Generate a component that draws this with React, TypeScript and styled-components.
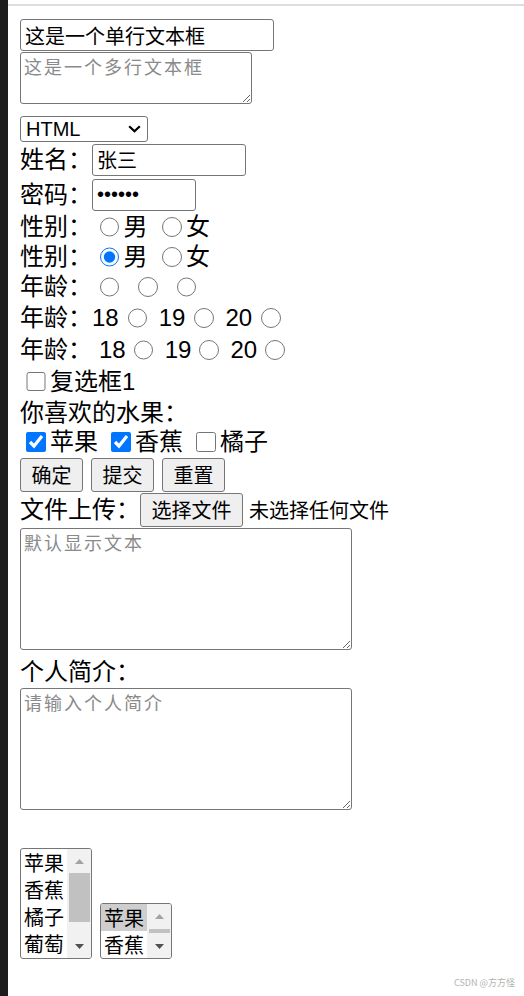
import React from "react";
import styled, { createGlobalStyle } from "styled-components";

const GlobalStyle = createGlobalStyle`
  html, body { margin: 0; padding: 0; background: #fff; }
  body { font-family: "Liberation Sans", "Noto Sans CJK SC", sans-serif; }
  * { box-sizing: border-box; }
`;

const Page = styled.div`
  position: relative;
  display: flex;
  min-height: 996px;
  background: #fff;
`;

const EdgeStrip = styled.div`
  width: 8px;
  flex-shrink: 0;
  background: #1d1d1d;
`;

const Content = styled.main`
  flex: 1;
  padding-top: 4px;
`;

const TopRule = styled.div`
  height: 2px;
  background: #dedede;
`;

const Form = styled.form`
  display: flex;
  flex-direction: column;
  align-items: flex-start;
  padding: 13px 0 0 12px;
  font-family: "Liberation Sans", "Noto Sans CJK SC", sans-serif;
  font-size: 24px;
  color: #000;
`;

const TextField = styled.input<{ $w: number }>`
  width: ${(p) => p.$w}px;
  height: 32px;
  margin: 0;
  padding: 0 4px;
  border: 1px solid #767676;
  border-radius: 3px;
  font-family: "Liberation Sans", "Noto Sans CJK SC", sans-serif;
  font-size: 20px;
  color: #000;
  background: #fff;
  outline: none;
`;

const TextArea = styled.textarea<{ $w: number; $h: number; $mt?: number }>`
  display: block;
  width: ${(p) => p.$w}px;
  height: ${(p) => p.$h}px;
  margin: ${(p) => p.$mt ?? 0}px 0 0;
  padding: 2px 3px;
  border: 1px solid #767676;
  border-radius: 3px;
  font-family: "Noto Sans CJK SC", sans-serif;
  font-size: 18px;
  letter-spacing: 2px;
  line-height: 22px;
  color: #000;
  background: #fff;
  outline: none;
  &::placeholder {
    color: #8a8a8a;
  }
`;

const SelectBox = styled.div`
  display: flex;
  align-items: center;
  width: 128px;
  height: 26px;
  margin-top: 12px;
  padding-right: 6px;
  border: 1px solid #767676;
  border-radius: 3px;
  background: #fff;
`;

const SelectControl = styled.select`
  appearance: none;
  flex: 1;
  height: 100%;
  margin: 0;
  padding: 0 0 0 5px;
  border: none;
  outline: none;
  background: transparent;
  font-family: "Liberation Sans", "Noto Sans CJK SC", sans-serif;
  font-size: 20px;
  line-height: 24px;
  color: #000;
`;

const Chevron = styled.svg`
  flex-shrink: 0;
  pointer-events: none;
`;

const Row = styled.div<{ $h: number; $mt?: number }>`
  display: flex;
  align-items: center;
  height: ${(p) => p.$h}px;
  margin-top: ${(p) => p.$mt ?? 0}px;
  line-height: 1.3;
  white-space: nowrap;
`;

const Label = styled.span`
  font-size: 24px;
`;

const Choices = styled.div<{ $indent?: number }>`
  display: flex;
  align-items: center;
  gap: 7px;
  margin-left: ${(p) => p.$indent ?? 0}px;
`;

const Choice = styled.label`
  display: inline-flex;
  align-items: center;
  font-size: 24px;
`;

const Radio = styled.input.attrs({ type: "radio" })<{ $ml?: number }>`
  flex-shrink: 0;
  width: 19.5px;
  height: 19.5px;
  margin: 0 4.5px 0 ${(p) => p.$ml ?? 7.5}px;
  accent-color: #0075ff;
`;

const Check = styled.input.attrs({ type: "checkbox" })`
  flex-shrink: 0;
  width: 19.5px;
  height: 19.5px;
  margin: 0 4.5px 0 6px;
  accent-color: #0075ff;
`;

const ButtonRow = styled.div`
  display: flex;
  gap: 8px;
  margin-top: 3px;
`;

const PushButton = styled.button`
  height: 34px;
  margin: 0;
  padding: 0 10.5px;
  border: 1px solid #767676;
  border-radius: 3px;
  background: #efefef;
  font-family: "Noto Sans CJK SC", sans-serif;
  font-size: 20px;
  line-height: 1;
  color: #000;
`;

const FileName = styled.span`
  margin-left: 6px;
  font-family: "Noto Sans CJK SC", sans-serif;
  font-size: 20px;
`;

const ListRow = styled.div`
  display: flex;
  align-items: flex-end;
  gap: 8px;
  margin-top: 38px;
`;

const ListBox = styled.div<{ $h: number }>`
  display: flex;
  width: 72px;
  height: ${(p) => p.$h}px;
  border: 1px solid #767676;
  border-radius: 3px;
  overflow: hidden;
  background: #fff;
`;

const OptionList = styled.ul`
  flex: 1;
  margin: 0;
  padding: 0;
  list-style: none;
`;

const OptionItem = styled.li<{ $selected?: boolean }>`
  height: 27px;
  padding-left: 3px;
  font-family: "Noto Sans CJK SC", sans-serif;
  font-size: 20px;
  line-height: 27px;
  white-space: nowrap;
  color: #000;
  background: ${(p) => (p.$selected ? "#cecece" : "transparent")};
`;

const ScrollBar = styled.div`
  display: flex;
  flex-direction: column;
  flex-shrink: 0;
  width: 24px;
  background: #f1f1f1;
`;

const ScrollArrow = styled.div<{ $h: number }>`
  display: flex;
  align-items: center;
  justify-content: center;
  flex-shrink: 0;
  height: ${(p) => p.$h}px;
`;

const ScrollTrack = styled.div`
  flex: 1;
  padding: 0 1px 0 2px;
`;

const ScrollThumb = styled.div<{ $h: number; $mt?: number }>`
  height: ${(p) => p.$h}px;
  margin-top: ${(p) => p.$mt ?? 0}px;
  background: #c1c1c1;
`;

const Watermark = styled.div`
  position: absolute;
  right: 9px;
  bottom: 7px;
  font-family: "Noto Sans CJK SC", sans-serif;
  font-size: 9px;
  line-height: 12px;
  color: #b3b3b3;
`;

const Arrow = ({ up, color }: { up?: boolean; color: string }) => (
  <svg width="9" height="5" viewBox="0 0 9 5">
    {up ? <polygon points="0,5 9,5 4.5,0" fill={color} /> : <polygon points="0,0 9,0 4.5,5" fill={color} />}
  </svg>
);

type ListProps = {
  items: string[];
  height: number;
  selected?: number;
  upH: number;
  downH: number;
  thumbH: number;
  thumbMt?: number;
};

const FakeListBox = ({ items, height, selected, upH, downH, thumbH, thumbMt }: ListProps) => (
  <ListBox $h={height}>
    <OptionList>
      {items.map((it, i) => (
        <OptionItem key={it} $selected={i === selected}>
          {it}
        </OptionItem>
      ))}
    </OptionList>
    <ScrollBar>
      <ScrollArrow $h={upH}>
        <Arrow up color="#a3a3a3" />
      </ScrollArrow>
      <ScrollTrack>
        <ScrollThumb $h={thumbH} $mt={thumbMt} />
      </ScrollTrack>
      <ScrollArrow $h={downH}>
        <Arrow color="#505050" />
      </ScrollArrow>
    </ScrollBar>
  </ListBox>
);

export default function App() {
  return (
    <>
      <GlobalStyle />
      <Page>
        <EdgeStrip />
        <Content>
          <TopRule />
          <Form onSubmit={(e) => e.preventDefault()}>
            <TextField $w={254} type="text" defaultValue="这是一个单行文本框" />
            <TextArea $w={232} $h={52} $mt={1} placeholder="这是一个多行文本框" />
            <SelectBox>
              <SelectControl defaultValue="HTML">
                <option>HTML</option>
                <option>CSS</option>
                <option>JavaScript</option>
              </SelectControl>
              <Chevron width="13" height="8" viewBox="0 0 13 8">
                <polyline points="1.2,1.2 6.5,6.3 11.8,1.2" fill="none" stroke="#000" strokeWidth="2.2" />
              </Chevron>
            </SelectBox>

            <Row $h={35}>
              <Label>姓名：</Label>
              <TextField $w={154} type="text" defaultValue="张三" />
            </Row>
            <Row $h={35}>
              <Label>密码：</Label>
              <TextField $w={104} type="password" defaultValue="123456" />
            </Row>

            <Row $h={30}>
              <Label>性别：</Label>
              <Choices>
                <Choice>
                  <Radio name="sex1" />男
                </Choice>
                <Choice>
                  <Radio name="sex1" />女
                </Choice>
              </Choices>
            </Row>
            <Row $h={30}>
              <Label>性别：</Label>
              <Choices>
                <Choice>
                  <Radio name="sex2" defaultChecked />男
                </Choice>
                <Choice>
                  <Radio name="sex2" />女
                </Choice>
              </Choices>
            </Row>
            <Row $h={30}>
              <Label>年龄：</Label>
              <Choices>
                <Radio name="age1" />
                <Radio name="age1" />
                <Radio name="age1" />
              </Choices>
            </Row>
            <Row $h={32}>
              <Label>年龄：</Label>
              <Choices>
                {["18", "19", "20"].map((n) => (
                  <Choice key={n}>
                    {n}
                    <Radio name="age2" $ml={9} />
                  </Choice>
                ))}
              </Choices>
            </Row>
            <Row $h={32}>
              <Label>年龄：</Label>
              <Choices $indent={7}>
                {["18", "19", "20"].map((n) => (
                  <Choice key={n}>
                    {n}
                    <Radio name="age3" $ml={8} />
                  </Choice>
                ))}
              </Choices>
            </Row>

            <Row $h={31}>
              <Choice>
                <Check />复选框1
              </Choice>
            </Row>
            <Row $h={32}>
              <Label>你喜欢的水果：</Label>
            </Row>
            <Row $h={26}>
              <Choices>
                <Choice>
                  <Check defaultChecked />苹果
                </Choice>
                <Choice>
                  <Check defaultChecked />香蕉
                </Choice>
                <Choice>
                  <Check />橘子
                </Choice>
              </Choices>
            </Row>

            <ButtonRow>
              <PushButton type="button">确定</PushButton>
              <PushButton type="submit">提交</PushButton>
              <PushButton type="reset">重置</PushButton>
            </ButtonRow>

            <Row $h={34} $mt={1}>
              <Label>文件上传：</Label>
              <PushButton type="button">选择文件</PushButton>
              <FileName>未选择任何文件</FileName>
            </Row>
            <TextArea $w={332} $h={122} $mt={1} placeholder="默认显示文本" />

            <Row $h={33} $mt={5}>
              <Label>个人简介：</Label>
            </Row>
            <TextArea $w={332} $h={122} placeholder="请输入个人简介" />

            <ListRow>
              <FakeListBox items={["苹果", "香蕉", "橘子", "葡萄"]} height={111} upH={24} downH={24} thumbH={49} />
              <FakeListBox items={["苹果", "香蕉"]} height={56} selected={0} upH={25} downH={24} thumbH={4} />
            </ListRow>
          </Form>
        </Content>
        <Watermark>CSDN @方方怪</Watermark>
      </Page>
    </>
  );
}
